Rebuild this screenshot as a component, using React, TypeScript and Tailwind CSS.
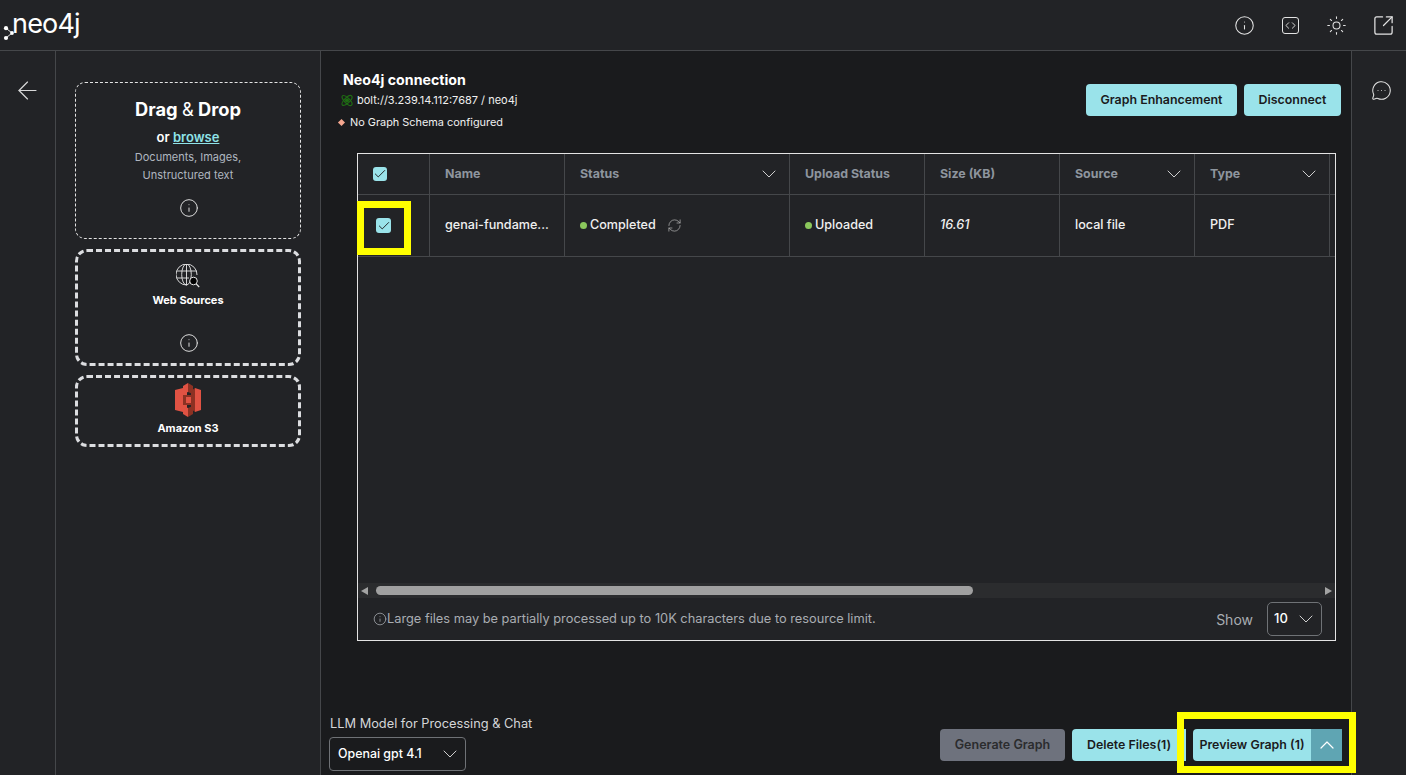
import React from 'react';
import { ArrowLeft, Check, ChevronDown, ChevronUp, Code, Info, MessageCircleMore, RefreshCw, SquareArrowOutUpRight, Sun } from 'lucide-react';

const font = { fontFamily: 'Inter, "Liberation Sans", sans-serif' };

const columns = [
    { label: 'Name', width: 'w-[135px]' },
    { label: 'Status', width: 'w-[225px]', menu: true },
    { label: 'Upload Status', width: 'w-[135px]' },
    { label: 'Size (KB)', width: 'w-[135px]' },
    { label: 'Source', width: 'w-[135px]', menu: true },
    { label: 'Type', width: 'w-[135px]', menu: true },
];

const Tick = ({ className }: { className: string }) => (
    <span className={`flex items-center justify-center rounded-[3px] bg-[#9ae3ea] ${className}`}>
        <Check className="w-[14px] h-[14px] text-[#1a1b1d]" strokeWidth={1.6} />
    </span>
);

const Dot = () => <span className="w-[7px] h-[7px] rounded-full bg-[#8bc75c] mr-[3px]" />;

const S3Icon = () => (
    <svg width="26" height="34" viewBox="0 0 26 34" className="block">
        <path d="M0 7 L12 4 V30 L0 27 Z" fill="#e05243" />
        <path d="M26 7 L20 5 V29 L26 27 Z" fill="#e05243" />
        <path d="M20 5 L16 8 V26 L20 29 Z" fill="#8c3123" />
        <path d="M13 0 L8 3 V11 L13 9 Z" fill="#e05243" />
        <path d="M13 0 L18 3 V11 L13 9 Z" fill="#8c3123" />
        <path d="M13 34 L8 31 V23 L13 25 Z" fill="#e05243" />
        <path d="M13 34 L18 31 V23 L13 25 Z" fill="#8c3123" />
        <path d="M8 12 H17 V22 H8 Z" fill="#8c3123" />
        <path d="M11 14 H16 V20 H11 Z" fill="#e05243" />
    </svg>
);

const GlobeSearch = () => (
    <svg width="24" height="24" viewBox="0 0 24 24" fill="none" stroke="#e8e8e8" strokeWidth="0.9" className="block">
        <path d="M21 11 A10.5 10.5 0 1 0 11 21" />
        <ellipse cx="10.5" cy="10.5" rx="4.8" ry="10.5" />
        <path d="M10.5 0 V21 M1 7 H20.5 M1 14 H13" />
        <circle cx="17.5" cy="17" r="3.8" fill="#000" strokeWidth="1" />
        <path d="M20.2 19.8 L23.2 23" strokeWidth="1.2" />
    </svg>
);

const BoltIcon = () => (
    <svg width="14" height="13" viewBox="0 0 14 13" fill="none" stroke="#1f6b14" strokeWidth="1.2" className="block">
        <ellipse cx="7" cy="6.5" rx="6.5" ry="2.6" transform="rotate(45 7 6.5)" />
        <ellipse cx="7" cy="6.5" rx="6.5" ry="2.6" transform="rotate(-45 7 6.5)" />
        <circle cx="7" cy="6.5" r="1.4" fill="#1f6b14" />
    </svg>
);

const LogoDots = () => (
    <svg width="12" height="16" viewBox="0 0 12 16" fill="#fff" className="block">
        <circle cx="3" cy="3.2" r="2.1" />
        <circle cx="3" cy="13" r="2.1" />
        <circle cx="9" cy="8" r="1.9" />
        <path d="M3 3.2 L9 8 L3 13" stroke="#fff" strokeWidth="0.9" fill="none" />
    </svg>
);

const CyanButton = ({ children, className }: { children: React.ReactNode; className: string }) => (
    <button className={`h-[32px] bg-[#9ae3ea] text-[#1a1b1d] text-[12.4px] font-semibold flex items-center justify-center ${className}`}>
        {children}
    </button>
);

const App: React.FC = () => {
    return (
        <div style={font} className="relative w-[1406px] h-[775px] overflow-hidden bg-[#222326] text-white flex flex-col">
            {/* Navbar */}
            <nav className="h-[51px] flex-shrink-0 border-b border-[#45474a] flex items-center justify-between pl-[3px] pr-[11px]">
                <div className="flex items-end">
                    <span className="mb-[1px]"><LogoDots /></span>
                    <span className="text-[27px] leading-[32px] font-normal tracking-[-0.8px] -ml-[3px] mb-[2px]">neo4j</span>
                </div>
                <div className="flex items-center gap-[27px] text-[#e3e3e3]">
                    <Info className="w-[21px] h-[21px]" strokeWidth={1.2} />
                    <span className="w-[17px] h-[17px] rounded-[3px] border-[1.5px] border-[#e3e3e3] flex items-center justify-center">
                        <Code className="w-[11px] h-[11px]" strokeWidth={2} />
                    </span>
                    <Sun className="w-[21px] h-[21px]" strokeWidth={1.2} />
                    <SquareArrowOutUpRight className="w-[23px] h-[23px] -ml-[2px]" strokeWidth={1.3} />
                </div>
            </nav>

            <div className="flex-grow flex min-h-0">
                {/* Left rail */}
                <div className="w-[56px] flex-shrink-0 border-r border-[#45474a] flex justify-center pt-[25px]">
                    <ArrowLeft className="w-[29px] h-[29px] text-[#d8d8d8]" strokeWidth={1} />
                </div>

                {/* Sources */}
                <aside className="w-[265px] flex-shrink-0 border-r border-[#45474a] pl-[19px] pr-[19px] pt-[31px] flex flex-col">
                    <div className="h-[157px] flex-shrink-0 rounded-[10px] border border-dashed border-[#e4e4e4] flex flex-col items-center pt-[14px]">
                        <div className="text-[18.3px] leading-[24px] font-bold">Drag <span className="font-normal">&amp;</span> Drop</div>
                        <div className="text-[13px] leading-[18px] font-semibold mt-[7px]">or <span className="text-[#8fe3e8] underline">browse</span></div>
                        <div className="text-[11px] leading-[18px] text-[#b0b7c0] mt-[2px] text-center">Documents, Images,<br />Unstructured text</div>
                        <Info className="w-[20px] h-[20px] mt-[14px] ml-[2px] text-[#dcdcdc]" strokeWidth={1.2} />
                    </div>
                    <div className="h-[117px] mt-[10px] flex-shrink-0 rounded-[12px] border-[3px] border-dashed border-[#dcdde0] flex flex-col items-center pt-[12px]">
                        <GlobeSearch />
                        <div className="text-[11px] leading-[14px] font-bold mt-[5px]">Web Sources</div>
                        <Info className="w-[20px] h-[20px] mt-[26px] ml-[2px] text-[#dcdcdc]" strokeWidth={1.2} />
                    </div>
                    <div className="h-[72px] mt-[9px] flex-shrink-0 rounded-[12px] border-[3px] border-dashed border-[#dcdde0] flex flex-col items-center pt-[5px]">
                        <S3Icon />
                        <div className="text-[11px] leading-[14px] font-bold mt-[4px]">Amazon S3</div>
                    </div>
                </aside>

                {/* Main */}
                <main className="w-[1030px] flex-shrink-0 bg-[#1a1b1d] flex flex-col pt-[20px] pr-[10px]">
                    <div className="flex justify-between">
                        <div className="pl-[17px]">
                            <div className="pl-[5px] text-[14.2px] leading-[18px] font-bold">Neo4j connection</div>
                            <div className="flex items-center gap-[3px] pl-[2px] mt-[3px] h-[16px]">
                                <BoltIcon />
                                <span className="text-[11px] text-[#f0f0f0]">bolt://3.239.14.112:7687 / neo4j</span>
                            </div>
                            <div className="flex items-center mt-[6px] h-[16px]">
                                <span className="w-[5px] h-[5px] ml-[1px] rotate-45 bg-[#f5a78f]" />
                                <span className="ml-[6px] text-[10.9px] text-[#f0f0f0]">No Graph Schema configured</span>
                            </div>
                        </div>
                        <div className="flex gap-[7px] mt-[13px]">
                            <CyanButton className="w-[151px] rounded-[4px]">Graph Enhancement</CyanButton>
                            <CyanButton className="w-[97px] rounded-[4px]">Disconnect</CyanButton>
                        </div>
                    </div>

                    {/* Files table */}
                    <div className="relative ml-[36px] mr-[5px] mt-[23px] h-[488px] flex-shrink-0 border border-[#e4e4e4] bg-[#222326] flex flex-col">
                        <div className="h-[41px] flex-shrink-0 flex border-b border-[#45474a] overflow-hidden">
                            <div className="w-[72px] flex-shrink-0 border-r border-[#45474a] flex items-center pl-[15px]">
                                <Tick className="w-[14px] h-[14px]" />
                            </div>
                            {columns.map((col) => (
                                <div key={col.label} className={`${col.width} flex-shrink-0 border-r border-[#45474a] flex items-center justify-between px-[15px] text-[12.4px] font-bold text-[#8e959e]`}>
                                    <span>{col.label}</span>
                                    {col.menu && <ChevronDown className="w-[24px] h-[24px] -mr-[7px] text-[#cfcfcf]" strokeWidth={1} />}
                                </div>
                            ))}
                        </div>
                        <div className="h-[62px] flex-shrink-0 flex border-b border-[#45474a] overflow-hidden text-[12.6px] font-medium text-[#f0f0f0]">
                            <div className="w-[72px] flex-shrink-0 border-r border-[#45474a] flex items-center pl-[18px]">
                                <Tick className="w-[15px] h-[15px]" />
                            </div>
                            <div className="w-[135px] flex-shrink-0 border-r border-[#45474a] flex items-center px-[15px] pb-[1px]">genai-fundame...</div>
                            <div className="w-[225px] flex-shrink-0 border-r border-[#45474a] flex items-center px-[15px] pb-[1px]">
                                <Dot />Completed
                                <RefreshCw className="w-[15px] h-[15px] ml-[11px] text-[#b8b8b8]" strokeWidth={1.1} />
                            </div>
                            <div className="w-[135px] flex-shrink-0 border-r border-[#45474a] flex items-center px-[15px] pb-[1px]"><Dot />Uploaded</div>
                            <div className="w-[135px] flex-shrink-0 border-r border-[#45474a] flex items-center px-[15px] pb-[1px] italic">16.61</div>
                            <div className="w-[135px] flex-shrink-0 border-r border-[#45474a] flex items-center px-[15px] pb-[1px]">local file</div>
                            <div className="w-[135px] flex-shrink-0 border-r border-[#45474a] flex items-center px-[15px] pb-[1px]">PDF</div>
                        </div>
                        <div className="flex-grow" />

                        {/* Scrollbar */}
                        <div className="h-[15px] flex-shrink-0 bg-[#2b2c2e] flex items-center justify-between px-[3px]">
                            <div className="flex items-center flex-grow">
                                <span className="w-0 h-0 border-y-[4px] border-y-transparent border-r-[7px] border-r-[#a3a3a3]" />
                                <span className="ml-[8px] h-[9px] w-[597px] rounded-full bg-[#a0a0a0]" />
                            </div>
                            <span className="w-0 h-0 border-y-[4px] border-y-transparent border-l-[7px] border-l-[#a3a3a3]" />
                        </div>
                        <div className="h-[42px] flex-shrink-0 flex items-center justify-between pl-[15px] pr-[13px]">
                            <div className="flex items-center text-[12.8px] text-[#a9adb2]">
                                <Info className="w-[14px] h-[14px]" strokeWidth={1.3} />
                                <span>Large files may be partially processed up to 10K characters due to resource limit.</span>
                            </div>
                            <div className="flex items-center gap-[14px]">
                                <span className="text-[14px] text-[#a9adb2]">Show</span>
                                <div className="w-[55px] h-[34px] rounded-[5px] border border-[#6f7276] flex items-center justify-between pl-[6px] pr-[3px] text-[13px] font-medium">
                                    10
                                    <ChevronDown className="w-[24px] h-[24px] text-[#cfcfcf]" strokeWidth={1} />
                                </div>
                            </div>
                        </div>
                    </div>

                    {/* Bottom actions */}
                    <div className="flex-grow flex items-end justify-between pl-[8px] -mr-[1px] pb-[4px]">
                        <div>
                            <div className="text-[12.8px] leading-[16px] text-[#d4d6d8] mb-[5px] ml-[1px]">LLM Model for Processing &amp; Chat</div>
                            <div className="w-[137px] h-[34px] rounded-[4px] border border-[#6f7276] flex items-center justify-between pl-[8px] pr-[3px] text-[12.4px] font-medium">
                                Openai gpt 4.1
                                <ChevronDown className="w-[24px] h-[24px] text-[#cfcfcf]" strokeWidth={1} />
                            </div>
                        </div>
                        <div className="flex gap-[7px] mb-[10px]">
                            <button className="h-[32px] w-[125px] rounded-[4px] bg-[#6e727d] text-[#2b2c2e] text-[12.5px] font-semibold">Generate Graph</button>
                            <CyanButton className="w-[114px] rounded-l-[4px]">Delete Files(1)</CyanButton>
                            <div className="flex">
                                <CyanButton className="w-[118px] rounded-l-[4px]">Preview Graph (1)</CyanButton>
                                <span className="w-[31px] h-[32px] bg-[#5fa5b3] flex items-center justify-center">
                                    <ChevronUp className="w-[24px] h-[24px] text-white" strokeWidth={1.2} />
                                </span>
                            </div>
                        </div>
                    </div>
                </main>

                {/* Right rail */}
                <div className="flex-grow border-l border-[#45474a] flex justify-center pt-[29px] pl-[4px]">
                    <MessageCircleMore className="w-[21px] h-[21px] text-[#e3e3e3]" strokeWidth={1.2} />
                </div>
            </div>

            {/* Highlights drawn over the screen */}
            <div className="absolute left-[357px] top-[201px] w-[54px] h-[54px] border-[7px] border-[#ffff00]" />
            <div className="absolute left-[1177px] top-[712px] w-[179px] h-[61px] border-[7px] border-[#ffff00]" />
        </div>
    );
};

export default App;
